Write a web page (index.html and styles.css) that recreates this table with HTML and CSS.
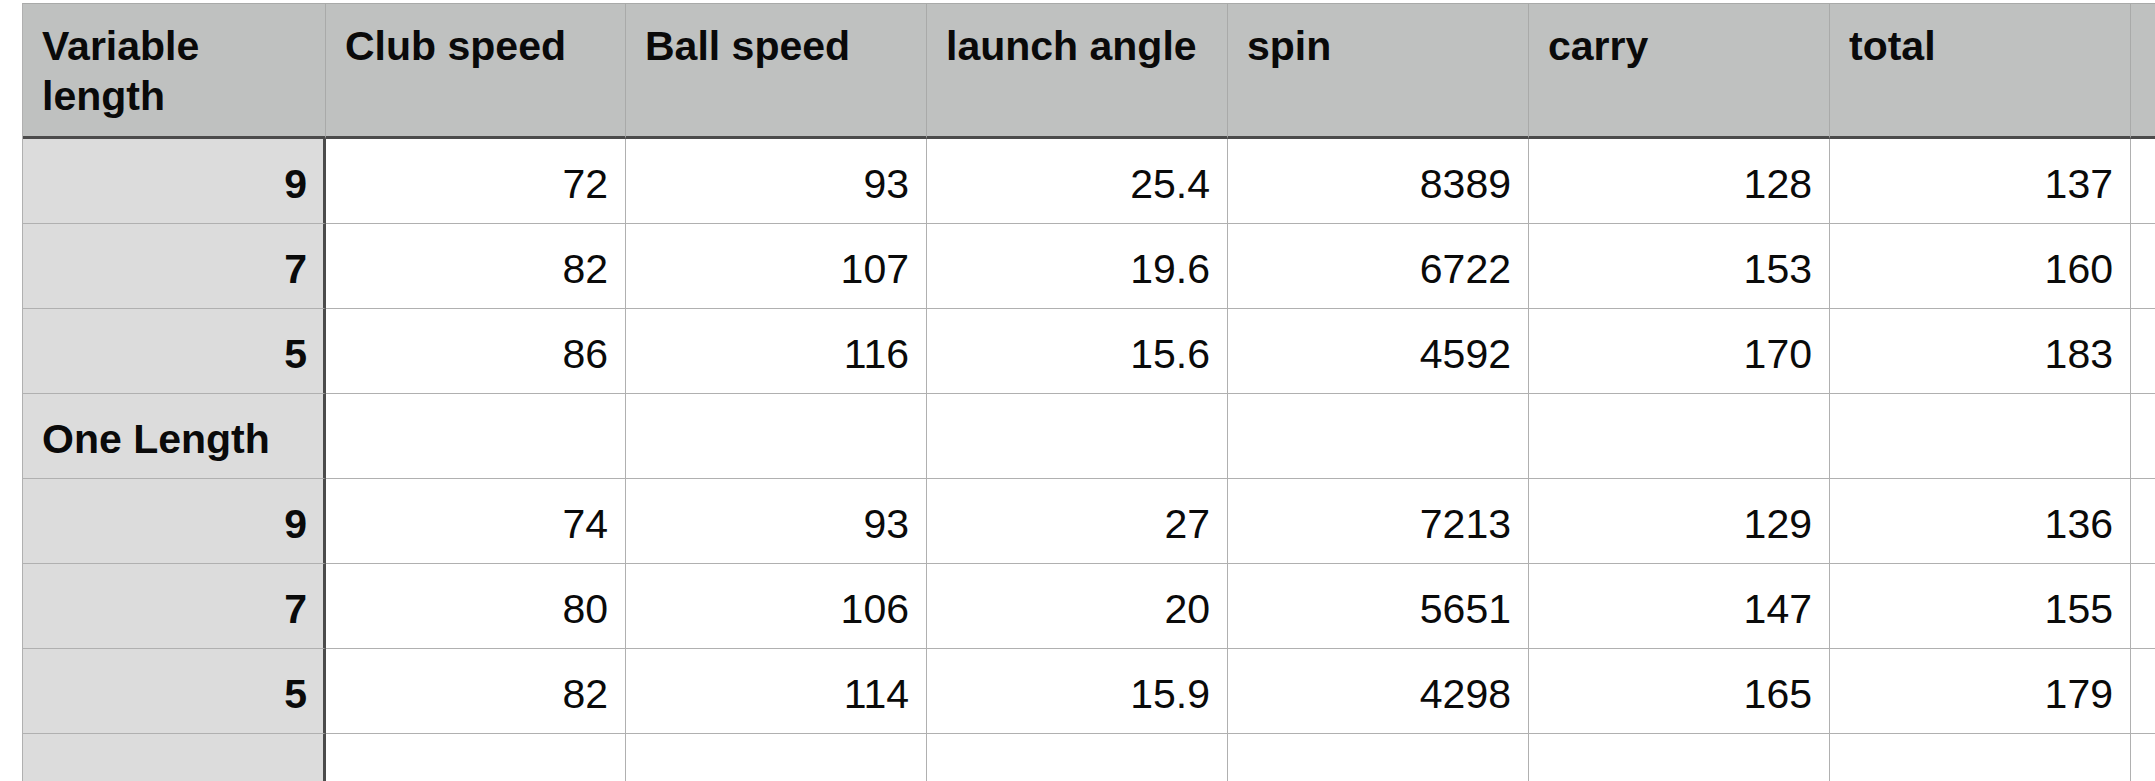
FILE: index.html
```html
<!DOCTYPE html>
<html lang="en">
<head>
<meta charset="utf-8">
<title>Golf club data</title>
<link rel="stylesheet" href="styles.css">
</head>
<body>
<div class="sheet">
  <div class="cell head label">Variable length</div>
  <div class="cell head">Club speed</div>
  <div class="cell head">Ball speed</div>
  <div class="cell head">launch angle</div>
  <div class="cell head">spin</div>
  <div class="cell head">carry</div>
  <div class="cell head">total</div>
  <div class="cell head edge"></div>

  <div class="cell label num">9</div>
  <div class="cell num">72</div><div class="cell num">93</div><div class="cell num">25.4</div><div class="cell num">8389</div><div class="cell num">128</div><div class="cell num">137</div><div class="cell edge"></div>

  <div class="cell label num">7</div>
  <div class="cell num">82</div><div class="cell num">107</div><div class="cell num">19.6</div><div class="cell num">6722</div><div class="cell num">153</div><div class="cell num">160</div><div class="cell edge"></div>

  <div class="cell label num">5</div>
  <div class="cell num">86</div><div class="cell num">116</div><div class="cell num">15.6</div><div class="cell num">4592</div><div class="cell num">170</div><div class="cell num">183</div><div class="cell edge"></div>

  <div class="cell label">One Length</div>
  <div class="cell"></div><div class="cell"></div><div class="cell"></div><div class="cell"></div><div class="cell"></div><div class="cell"></div><div class="cell edge"></div>

  <div class="cell label num">9</div>
  <div class="cell num">74</div><div class="cell num">93</div><div class="cell num">27</div><div class="cell num">7213</div><div class="cell num">129</div><div class="cell num">136</div><div class="cell edge"></div>

  <div class="cell label num">7</div>
  <div class="cell num">80</div><div class="cell num">106</div><div class="cell num">20</div><div class="cell num">5651</div><div class="cell num">147</div><div class="cell num">155</div><div class="cell edge"></div>

  <div class="cell label num">5</div>
  <div class="cell num">82</div><div class="cell num">114</div><div class="cell num">15.9</div><div class="cell num">4298</div><div class="cell num">165</div><div class="cell num">179</div><div class="cell edge"></div>

  <div class="cell label last"></div>
  <div class="cell last"></div><div class="cell last"></div><div class="cell last"></div><div class="cell last"></div><div class="cell last"></div><div class="cell last"></div><div class="cell last edge"></div>
</div>
</body>
</html>
```

FILE: styles.css
```css
html, body {
  margin: 0;
  padding: 0;
  background: #ffffff;
  overflow: hidden;
  width: 2155px;
  height: 781px;
}

.sheet {
  margin: 3px 0 0 22px;
  border-top: 1px solid #a9aaa9;
  border-left: 1px solid #b0b0b0;
  display: grid;
  grid-template-columns: 303px 300px 301px 301px 301px 301px 301px 24px;
  grid-template-rows: 135px repeat(7, 85px) 47px;
  width: max-content;
  font-family: "Liberation Sans", Arial, sans-serif;
  font-size: 41px;
  color: #0a0a0a;
}

.cell {
  box-sizing: border-box;
  border-right: 1px solid #b0b0b0;
  border-bottom: 1px solid #b0b0b0;
  background: #ffffff;
  display: flex;
  align-items: center;
  padding: 6px 17px 0 19px;
  white-space: nowrap;
  overflow: hidden;
}

.num {
  justify-content: flex-end;
}

.label {
  background: #dcdcdc;
  border-right: 3px solid #4b4b4b;
  font-weight: bold;
  padding-right: 16px;
}

.head {
  background: #bfc1c0;
  border-right-color: #a9aaa9;
  border-bottom: 3px solid #4b4b4b;
  align-items: flex-start;
  font-weight: bold;
  line-height: 50px;
  padding: 17px 10px 0 19px;
  white-space: normal;
}

.head.label {
  border-right: 1px solid #a9aaa9;
  background: #bfc1c0;
}

.edge {
  border-right: none;
  padding: 0;
}

.last {
  border-bottom: none;
}
```
